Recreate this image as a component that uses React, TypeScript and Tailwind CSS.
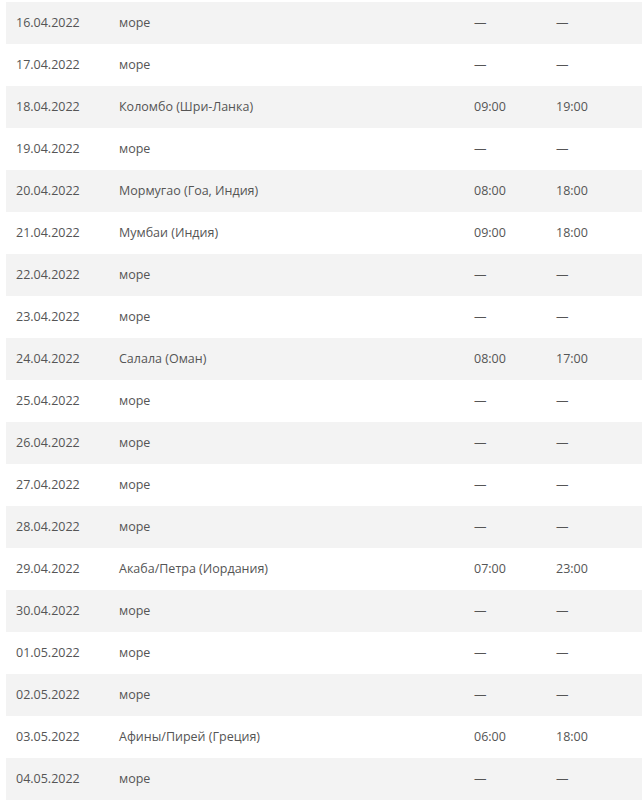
import React from "react";

const rows: [string, string, string, string][] = [
  ["16.04.2022", "море", "—", "—"],
  ["17.04.2022", "море", "—", "—"],
  ["18.04.2022", "Коломбо (Шри-Ланка)", "09:00", "19:00"],
  ["19.04.2022", "море", "—", "—"],
  ["20.04.2022", "Мормугао (Гоа, Индия)", "08:00", "18:00"],
  ["21.04.2022", "Мумбаи (Индия)", "09:00", "18:00"],
  ["22.04.2022", "море", "—", "—"],
  ["23.04.2022", "море", "—", "—"],
  ["24.04.2022", "Салала (Оман)", "08:00", "17:00"],
  ["25.04.2022", "море", "—", "—"],
  ["26.04.2022", "море", "—", "—"],
  ["27.04.2022", "море", "—", "—"],
  ["28.04.2022", "море", "—", "—"],
  ["29.04.2022", "Акаба/Петра (Иордания)", "07:00", "23:00"],
  ["30.04.2022", "море", "—", "—"],
  ["01.05.2022", "море", "—", "—"],
  ["02.05.2022", "море", "—", "—"],
  ["03.05.2022", "Афины/Пирей (Греция)", "06:00", "18:00"],
  ["04.05.2022", "море", "—", "—"],
];

export default function App() {
  return (
    <div className="bg-white w-[642px] h-[806px] overflow-hidden pt-[2px] pl-[6px]" style={{ fontFamily: '"Open Sans", sans-serif' }}>
      <div className="flex flex-col">
        {rows.map((r, i) => (
          <div
            key={i}
            className={`flex items-center h-[42px] text-[12.5px] text-[#555555] ${i % 2 === 0 ? "bg-[#f3f3f3]" : "bg-white"}`}
          >
            <div className="w-[103px] pl-[10px]">{r[0]}</div>
            <div className="w-[355px] pl-[10px]">{r[1]}</div>
            <div className="w-[82px] pl-[10px]">{r[2]}</div>
            <div className="flex-1 pl-[10px]">{r[3]}</div>
          </div>
        ))}
      </div>
    </div>
  );
}
